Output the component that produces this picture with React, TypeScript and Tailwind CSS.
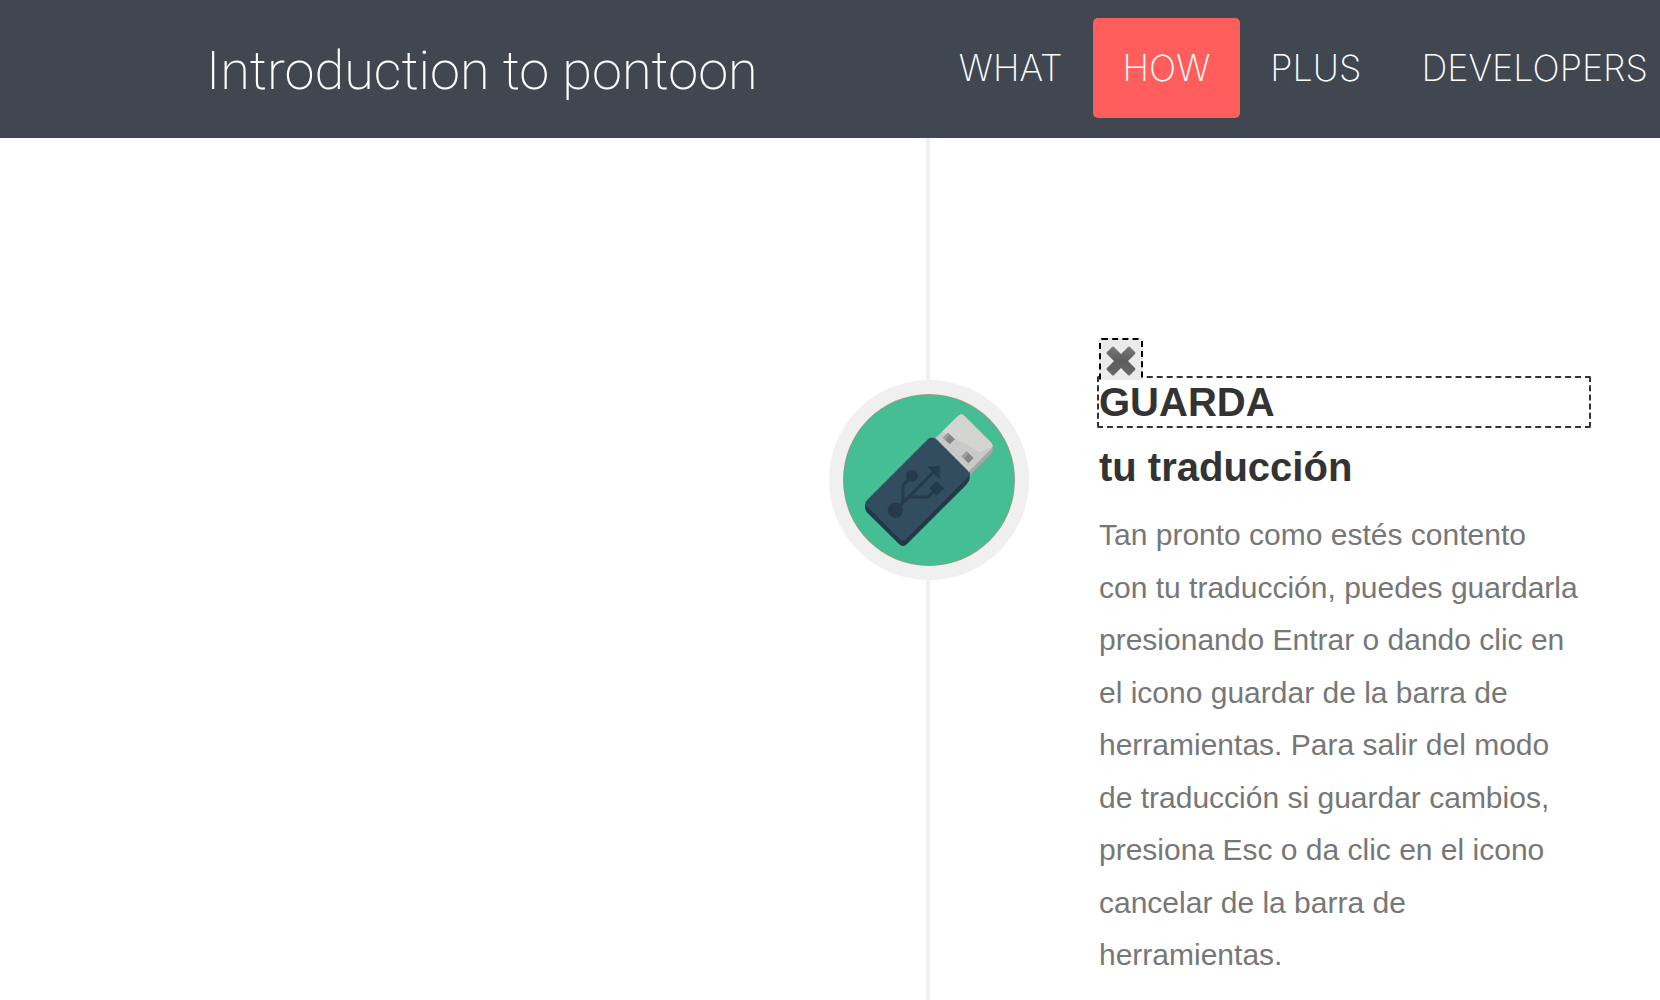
const navItems = [
  { label: "WHAT", active: false },
  { label: "HOW", active: true },
  { label: "PLUS", active: false },
  { label: "DEVELOPERS", active: false },
];

function UsbBadge() {
  return (
    <svg viewBox="27 29 600 600" className="block size-[200px]" role="img" aria-label="USB">
      <circle cx="327" cy="329" r="300" fill="#f0f0f0" />
      <circle cx="327" cy="329" r="258" fill="#b5907c" />
      <circle cx="327" cy="329" r="256" fill="#45bd95" />
      <path d="M446 304 L518 232 V243 Q518 247 514 251 L449 316 Z" fill="#a6a6a6" />
      <path d="M346 204 L415 136 Q424 127 433 136 L514 217 Q522 226 514 236 L446 304 Z" fill="#c9c9c9" />
      <path d="M366 184 L415 136 Q424 127 433 136 L514 217 Q519 223 517 230 L480 245 Z" fill="#d4d4d2" />
      <path d="M384 187 L405 207 L389 222 L369 202 Z" fill="#858585" />
      <path d="M384 187 L369 202 L376 209 L390 193 Z" fill="#9d9d9d" />
      <path d="M440 243 L461 263 L445 279 L425 258 Z" fill="#858585" />
      <path d="M440 243 L425 258 L432 265 L446 249 Z" fill="#9d9d9d" />
      <path d="M135 400 V412 Q136 421 142 427 L237 521 Q249 533 261 521 L439 343 Q449 333 449 324 V304 L250 490 Z" fill="#233848" />
      <path d="M142 388 L322 208 Q335 195 349 207 L442 300 Q452 311 442 322 L258 506 Q249 515 239 506 L142 409 Q130 399 142 388 Z" fill="#324d5e" />
      <g fill="none" stroke="#253b4a" strokeWidth="9">
        <path d="M226 420 L342 304" />
        <path d="M249 396 V345 L275 318" />
        <path d="M263 379 L323 381 L350 354" />
      </g>
      <g fill="#253b4a">
        <circle cx="226" cy="420" r="23" />
        <circle cx="276" cy="316" r="18" />
        <path d="M321 289 L360 286 L359 325 Z" />
        <path d="M350 332 L372 354 L350 376 L328 354 Z" />
      </g>
    </svg>
  );
}

function CancelIcon() {
  return (
    <svg viewBox="0 0 30 30" className="block size-[30px]" aria-hidden="true">
      <defs>
        <linearGradient id="cross" x1="0" y1="0" x2="0" y2="1">
          <stop offset="0" stopColor="#7a7a7a" />
          <stop offset="0.5" stopColor="#5c5c5c" />
          <stop offset="1" stopColor="#686868" />
        </linearGradient>
      </defs>
      <path
        d="M1 6 L6 1 Q7 0 8 1 L15 8 L22 1 Q23 0 24 1 L29 6 Q30 7 29 8 L22 15 L29 22 Q30 23 29 24 L24 29 Q23 30 22 29 L15 22 L8 29 Q7 30 6 29 L1 24 Q0 23 1 22 L8 15 L1 8 Q0 7 1 6 Z"
        fill="url(#cross)"
      />
    </svg>
  );
}

export default function App() {
  return (
    <div className="flex min-h-screen flex-col overflow-hidden bg-white font-['Liberation_Sans',Arial,sans-serif]">
      <header className="flex h-[138px] items-start bg-[#404751] text-white">
        <h1 className="ml-[206px] whitespace-nowrap pt-[39px] font-['Roboto',sans-serif] text-[54px] font-extralight leading-[64px]">
          Introduction to pontoon
        </h1>
        <nav className="-mr-[18px] ml-auto flex shrink-0 pt-[18px] font-['Inter',sans-serif] text-[36px] font-extralight">
          {navItems.map((item) => (
            <a
              key={item.label}
              href={"#" + item.label.toLowerCase()}
              className={
                item.active
                  ? "rounded-[5px] bg-[#ff5e5c] px-[30px] leading-[100px]"
                  : "rounded-[5px] px-[30px] leading-[100px]"
              }
            >
              {item.label}
            </a>
          ))}
        </nav>
      </header>

      <main className="grid grow grid-cols-[829fr_200px_631fr]">
        <div />
        <div className="flex flex-col items-center">
          <div className="mr-0.5 h-[242px] w-1 bg-[#f0f0f0]" />
          <UsbBadge />
          <div className="mr-0.5 w-1 grow bg-[#f0f0f0]" />
        </div>
        <article className="pl-[68px] pr-[69px] pt-[200px]">
          <div className="relative z-10 ml-0.5 h-[38px]">
            <button
              type="button"
              aria-label="Cancelar"
              className="flex h-[42px] w-11 justify-center rounded-t-[3px] border-2 border-b-0 border-dashed border-black bg-[#ebebeb] pt-[6px]"
            >
              <CancelIcon />
            </button>
          </div>
          <h2 className="text-[40px] font-bold text-[#333]">
            <span className="block rounded-[2px] border-2 border-dashed border-[#333] leading-[48px]">GUARDA</span>
            <span className="mt-[15px] block pl-0.5 leading-[48px]">tu traducción</span>
          </h2>
          <p className="mt-[18px] pl-0.5 text-[30px] leading-[1.75] text-[#777]">
            Tan pronto como estés contento
            <br />
            con tu traducción, puedes guardarla presionando Entrar o dando clic en el icono guardar de la barra de
            herramientas. Para salir del modo
            <br />
            de traducción si guardar cambios, presiona Esc o da clic en el icono cancelar de la barra de herramientas.
          </p>
        </article>
      </main>
    </div>
  );
}
